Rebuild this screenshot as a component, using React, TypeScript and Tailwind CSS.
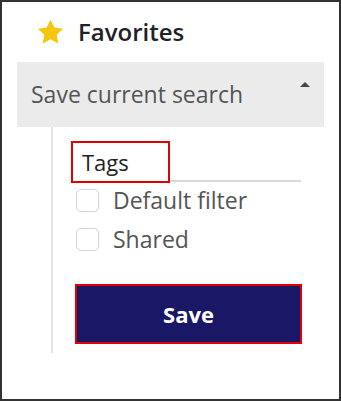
import React from "react";

function Star() {
  return (
    <svg width="27" height="26" viewBox="0 0 24 23" className="shrink-0">
      <path
        d="M12 0.5l3.4 7.1 7.9 1-5.8 5.4 1.5 7.9L12 18l-7 3.9 1.5-7.9L0.7 8.6l7.9-1z"
        fill="#f5c60f"
      />
    </svg>
  );
}

function Checkbox({ label }: { label: string }) {
  return (
    <label className="flex items-center h-[31px]">
      <span className="w-[23px] h-[23px] rounded-[5px] border border-[#d4d4d4] bg-white shrink-0" />
      <span className="ml-[14px] text-[23px] text-[#555] leading-none">{label}</span>
    </label>
  );
}

export default function App() {
  return (
    <div
      className="w-[341px] h-[401px] border-2 border-[#333] bg-white overflow-hidden"
      style={{ fontFamily: '"Open Sans", "Noto Sans", sans-serif' }}
    >
      <div className="flex items-center pl-[35px] h-[60px]">
        <Star />
        <span className="ml-[14px] text-[24px] font-semibold text-[#1f2328] leading-none">
          Favorites
        </span>
      </div>

      <div className="ml-[15px] w-[307px] h-[65px] bg-[#ebebeb] flex items-center justify-between pl-[14px] pr-[14px]">
        <span className="text-[23px] text-[#555] leading-none">Save current search</span>
        <span className="w-0 h-0 border-l-[5px] border-r-[5px] border-b-[5px] border-l-transparent border-r-transparent border-b-[#444] mb-[20px]" />
      </div>

      <div className="ml-[49px] w-[250px] h-[226px] border-l-2 border-[#e2e2e6] pl-[18px] pt-[14px]">
        <div className="flex items-end">
          <div className="w-[99px] h-[42px] border-2 border-[#e00000] flex items-center pl-[9px]">
            <span className="text-[22px] text-[#222] leading-none">Tags</span>
          </div>
          <div className="flex-1 border-b-2 border-[#d8d8d8] mb-[1px]" />
        </div>
        <div className="pl-[5px] pt-[2px]">
          <Checkbox label="Default filter" />
          <div className="h-[8px]" />
          <Checkbox label="Shared" />
        </div>
        <button className="mt-[29px] ml-[4px] w-[227px] h-[60px] border-2 border-[#e00000] bg-[#1a1766] text-white text-[22px] font-bold">
          Save
        </button>
      </div>
    </div>
  );
}
